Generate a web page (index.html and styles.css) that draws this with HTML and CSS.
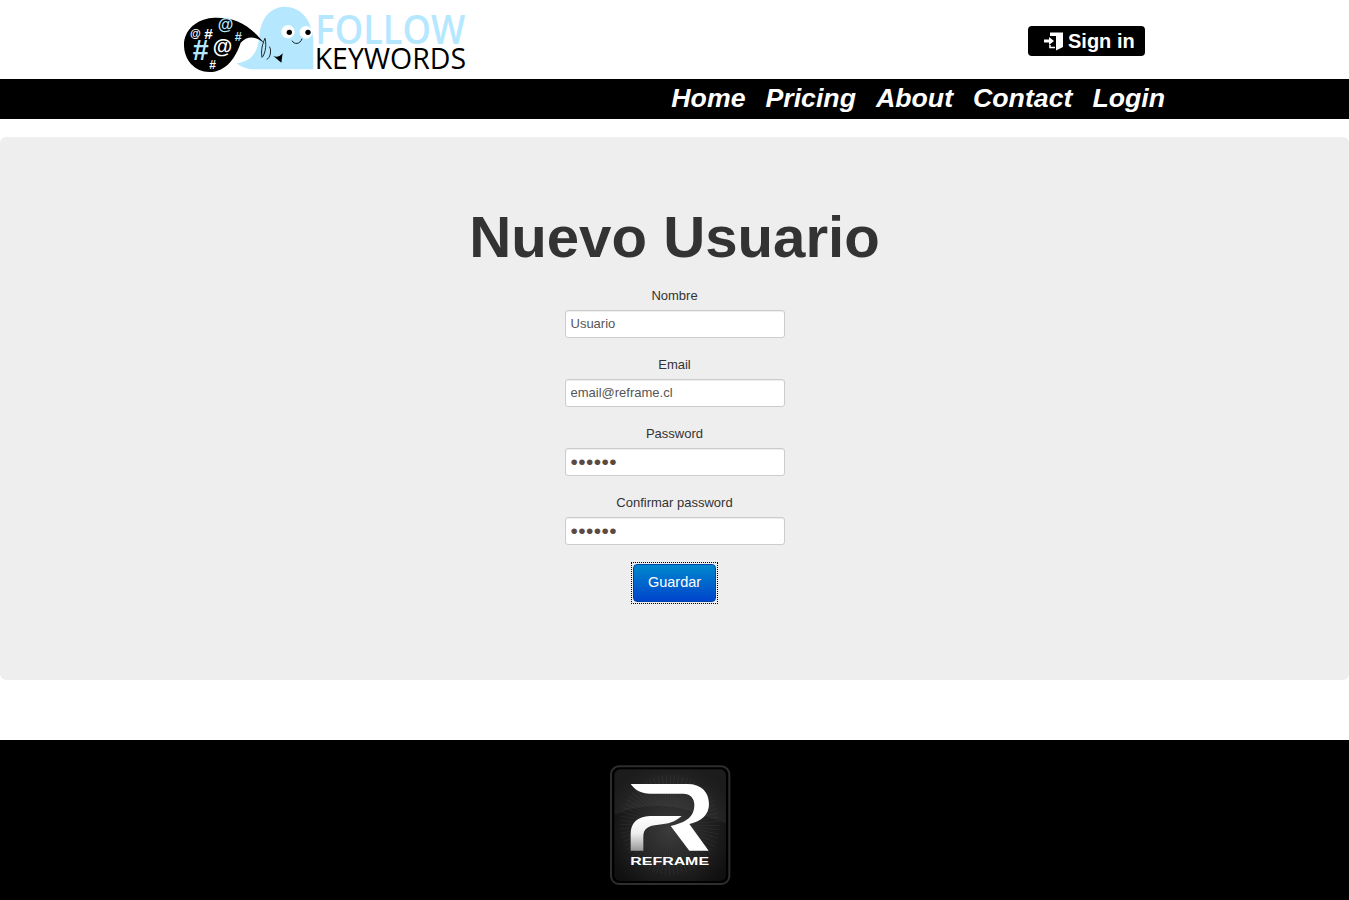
FILE: index.html
```html
<!DOCTYPE html>
<html lang="en">
<head>
  <meta charset="UTF-8">
  <meta name="viewport" content="width=device-width, initial-scale=1.0">
  <title>Follow Keywords</title>
  <link rel="stylesheet" href="styles.css">
</head>
<body>
  <header class="top">
    <svg class="logo" viewBox="0 0 930 240" width="310" height="80">
      <!-- ghost -->
      <path d="M200 190 C240 185 262 165 268 110 C272 50 305 20 345 20 C395 20 428 65 430 120 L430 208 H250 C230 208 212 200 200 190 Z" fill="#b5e8ff"/>
      <circle cx="354" cy="95" r="20" fill="#fff"/>
      <circle cx="408" cy="97" r="19" fill="#fff"/>
      <circle cx="358" cy="97" r="8" fill="#000"/>
      <circle cx="414" cy="97" r="8" fill="#000"/>
      <path d="M366 122 C372 134 390 134 396 116" fill="none" stroke="#000" stroke-width="2.5"/>
      <path d="M285 115 C292 140 282 168 276 172 C272 150 278 130 285 115 M298 140 C306 150 300 176 290 178" fill="none" stroke="#000" stroke-width="2.5"/>
      <path d="M310 168 C318 172 328 172 338 160 L334 188 Z" fill="#000"/>
      <!-- speech bubble -->
      <path d="M42 135 C42 90 80 58 125 54 C190 50 235 70 285 132 C255 105 232 108 212 128 C198 170 170 216 118 216 C75 216 42 180 42 135 Z" fill="#000"/>
      <g class="logo-symbols">
        <text x="60" y="112" font-size="33" fill="#fff">@</text>
        <text x="103" y="116" font-size="46" fill="#fff">#</text>
        <text x="143" y="90" font-size="48" fill="#b5e8ff">@</text>
        <text x="194" y="123" font-size="38" fill="#b5e8ff">#</text>
        <text x="68" y="180" font-size="86" fill="#b5e8ff">#</text>
        <text x="128" y="160" font-size="60" fill="#fff">@</text>
        <text x="118" y="208" font-size="36" fill="#fff">#</text>
      </g>
      <text class="logo-follow" x="436" y="132" font-size="118" textLength="450" lengthAdjust="spacingAndGlyphs">FOLLOW</text>
      <text class="logo-keywords" x="434" y="206" font-size="87" textLength="454" lengthAdjust="spacingAndGlyphs">KEYWORDS</text>
    </svg>
    <a class="signin" href="#">
      <svg viewBox="0 0 22 20" width="22" height="20">
        <path d="M7 5 V1.5 H20 V16 L13 19.5 V5 Z" fill="#fff"/>
        <path d="M7 14 V16.5 H12" fill="none" stroke="#fff" stroke-width="1.6"/>
        <path d="M1 8.5 H6 V6 L11 10 L6 14 V11.5 H1 Z" fill="#fff"/>
      </svg>
      Sign in
    </a>
  </header>

  <nav class="menu">
    <a href="#">Home</a>
    <a href="#">Pricing</a>
    <a href="#">About</a>
    <a href="#">Contact</a>
    <a href="#">Login</a>
  </nav>

  <main class="hero">
    <h1>Nuevo Usuario</h1>
    <form class="user-form">
      <label for="nombre">Nombre</label>
      <input type="text" id="nombre" placeholder="Usuario">
      <label for="email">Email</label>
      <input type="text" id="email" placeholder="email@reframe.cl">
      <label for="password">Password</label>
      <input type="password" id="password" value="123456">
      <label for="confirmar">Confirmar password</label>
      <input type="password" id="confirmar" value="123456">
      <div class="save-focus">
        <button type="button" class="save">Guardar</button>
      </div>
    </form>
  </main>

  <footer class="bottom">
    <svg class="reframe" viewBox="0 0 420 390" width="140" height="130">
      <defs>
        <radialGradient id="glow" cx="50%" cy="55%" r="60%">
          <stop offset="0" stop-color="#3a3a3a"/>
          <stop offset="1" stop-color="#101010"/>
        </radialGradient>
        <linearGradient id="letter" x1="0" y1="0" x2="0" y2="1">
          <stop offset="0" stop-color="#fff"/>
          <stop offset="0.5" stop-color="#eee"/>
          <stop offset="1" stop-color="#999"/>
        </linearGradient>
      </defs>
      <rect x="33" y="19" width="355" height="353" rx="24" fill="#000" stroke="#2e2e2e" stroke-width="6"/>
      <rect x="43" y="28" width="335" height="335" rx="18" fill="url(#glow)"/>
      <path d="M43 165 C110 135 190 130 260 150 L378 190 V46 C378 36 370 28 360 28 H61 C51 28 43 36 43 46 Z" fill="#fff" opacity="0.05"/>
      <circle cx="210" cy="195" r="75" fill="none" stroke="#fff" stroke-width="150" stroke-dasharray="1.5 5" opacity="0.05"/>
      <path d="M92 72 H262 C304 72 327 96 327 132 C327 164 305 184 268 192 L326 272 H268 L212 198 C245 190 283 178 283 135 C283 114 270 101 250 101 H150 C125 101 106 92 92 72 Z" fill="#fff"/>
      <path d="M92 272 V222 C92 188 112 170 150 168 H245 C225 186 205 192 175 194 C145 196 130 206 130 228 V272 Z" fill="url(#letter)"/>
      <text class="reframe-name" x="91" y="316" font-size="33" textLength="236" lengthAdjust="spacingAndGlyphs">REFRAME</text>
    </svg>
  </footer>
</body>
</html>
```

FILE: styles.css
```css
body {
  margin: 0;
  font-family: "Liberation Sans", Arial, sans-serif;
  background-color: #fff;
  color: #333;
}

/* Header */
.top {
  height: 79px;
  display: flex;
  justify-content: space-between;
  padding: 0 204px 0 170px;
}
.logo {
  display: block;
}
.logo-symbols {
  font-family: "Liberation Sans", sans-serif;
  font-weight: bold;
}
.logo-follow {
  font-family: "Open Sans", sans-serif;
  font-weight: 600;
  fill: #b5e8ff;
}
.logo-keywords {
  font-family: "Open Sans", sans-serif;
  fill: #000;
}
.signin {
  align-self: flex-start;
  margin-top: 26px;
  width: 117px;
  height: 30px;
  box-sizing: border-box;
  padding-left: 15px;
  display: flex;
  align-items: center;
  gap: 3px;
  background-color: #000;
  border-radius: 4px;
  color: #fff;
  font-size: 20px;
  font-weight: bold;
  text-decoration: none;
}

/* Menu */
.menu {
  height: 40px;
  box-sizing: border-box;
  padding: 0 184px 2px 0;
  background-color: #000;
  display: flex;
  justify-content: flex-end;
  align-items: center;
  gap: 20px;
}
.menu a {
  color: #fff;
  font-size: 26.7px;
  font-weight: bold;
  font-style: italic;
  text-decoration: none;
}

/* Form panel */
.hero {
  margin-top: 18px;
  height: 543px;
  box-sizing: border-box;
  padding-top: 59px;
  background-color: #eee;
  border-radius: 6px;
  text-align: center;
}
.hero h1 {
  margin: 0 0 10px;
  font-size: 58.2px;
  line-height: 81px;
  color: #333;
}
.user-form {
  display: flex;
  flex-direction: column;
  align-items: center;
}
.user-form label {
  font-size: 13px;
  line-height: 18px;
  margin-bottom: 5px;
}
.user-form input {
  width: 220px;
  height: 28px;
  box-sizing: border-box;
  padding: 3px 5px 5px;
  margin-bottom: 18px;
  border: 1px solid #ccc;
  border-radius: 3px;
  background-color: #fff;
  box-shadow: inset 0 1px 1px rgba(0, 0, 0, 0.075);
  font-family: "Liberation Sans", Arial, sans-serif;
  font-size: 13px;
  color: #555;
}
.user-form input::placeholder {
  color: #555;
  opacity: 1;
}
.user-form input[type="password"] {
  padding: 4px 5px;
  font-size: 21px;
  letter-spacing: 0.4px;
  color: #5c4a42;
}
.save-focus {
  margin-top: -1px;
  padding: 1px;
  border: 1px dotted #000;
}
.save {
  display: block;
  width: 83px;
  height: 38px;
  padding: 0 0 3px;
  border: 1px solid #0044a8;
  border-radius: 4px;
  background: linear-gradient(#0088cc, #0044cc);
  color: #fff;
  font-family: "Liberation Sans", Arial, sans-serif;
  font-size: 14.5px;
}

/* Footer */
.bottom {
  margin-top: 60px;
  height: 160px;
  background-color: #000;
  display: flex;
  justify-content: center;
  padding: 20px 9px 0 0;
  box-sizing: border-box;
}
.reframe {
  display: block;
}
.reframe-name {
  font-family: "Liberation Sans", sans-serif;
  font-weight: bold;
  fill: #fff;
}
```
